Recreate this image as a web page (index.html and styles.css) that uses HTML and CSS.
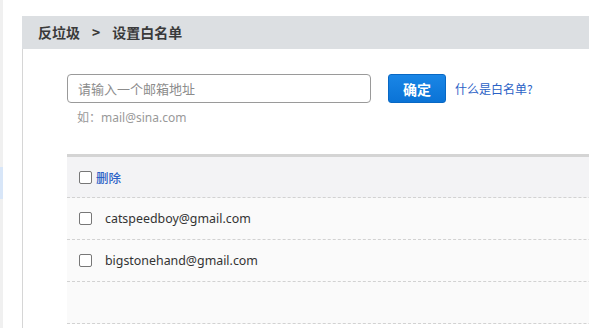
FILE: index.html
```html
<!DOCTYPE html>
<html>
<head>
<meta charset="utf-8">
<link rel="stylesheet" href="styles.css">
</head>
<body>
<div class="page">
  <aside class="side"><div class="side-active"></div></aside>
  <main class="main">
    <div class="crumb">反垃圾<span class="sep">&gt;</span>设置白名单</div>
    <div class="body">
      <div class="form">
        <input class="email" type="text" placeholder="请输入一个邮箱地址">
        <button class="ok">确定</button>
        <a class="help">什么是白名单?</a>
      </div>
      <div class="hint">如：mail@sina.com</div>
      <div class="list">
        <div class="row head"><span class="cb"></span><a class="del">删除</a></div>
        <div class="row"><span class="cb"></span><span class="addr">catspeedboy@gmail.com</span></div>
        <div class="row"><span class="cb"></span><span class="addr">bigstonehand@gmail.com</span></div>
        <div class="row"></div>
      </div>
    </div>
  </main>
</div>
</body>
</html>
```
FILE: styles.css
```css
html, body {
  margin: 0;
  padding: 0;
  background: #fff;
  overflow: hidden;
  font-family: "Noto Sans", "Noto Sans CJK SC", sans-serif;
}
.page {
  display: flex;
  height: 328px;
}
.side {
  flex: 0 0 3px;
  width: 3px;
  background: #f0f0f0;
  padding-top: 167px;
  box-sizing: border-box;
}
.side-active {
  height: 32px;
  background: #d8e6f8;
}
.main {
  margin-left: 19px;
  margin-top: 16px;
  flex: 1;
  display: flex;
  flex-direction: column;
  min-width: 0;
}
.crumb {
  height: 33px;
  background: #dcdfe2;
  box-sizing: border-box;
  padding-left: 16px;
  font-size: 14px;
  font-weight: bold;
  color: #3a3a3a;
  line-height: 33px;
  font-family: "Noto Sans CJK SC", sans-serif;
}
.sep {
  margin: 0 12px 0 12px;
}
.body {
  flex: 1;
  border-left: 1px solid #d6d6d6;
  padding: 25px 0 0 44px;
}
.form {
  display: flex;
  align-items: center;
  height: 29px;
}
.email {
  width: 304px;
  height: 29px;
  box-sizing: border-box;
  border: 1px solid #9a9a9a;
  border-radius: 4px;
  padding: 0 10px;
  font-size: 13px;
  font-family: "Noto Sans CJK SC", sans-serif;
  outline: none;
}
.email::placeholder {
  color: #8c8c8c;
}
.ok {
  margin-left: 17px;
  width: 58px;
  height: 29px;
  border: 1px solid #0868c4;
  border-radius: 3px;
  background: linear-gradient(#1a86e6, #0a73d6);
  color: #fff;
  font-size: 14px;
  font-weight: bold;
  font-family: "Noto Sans CJK SC", sans-serif;
  padding: 0;
}
.help {
  margin-left: 9px;
  font-size: 12px;
  color: #2b62c6;
  font-family: "Noto Sans CJK SC", sans-serif;
}
.hint {
  margin-top: 7px;
  padding-left: 10px;
  font-size: 12px;
  color: #999;
  line-height: 16px;
}
.list {
  margin-top: 28px;
  width: 700px;
  border-top: 3px solid #d4d4d4;
}
.row {
  height: 42px;
  box-sizing: border-box;
  border-bottom: 1px dashed #d2d2d2;
  background: #fafafa;
  display: flex;
  align-items: center;
  padding-left: 12px;
}
.row.head {
  height: 41px;
  background: #f3f3f5;
}
.cb {
  width: 11px;
  height: 11px;
  border: 1px solid #777;
  border-radius: 2px;
  background: #fff;
}
.del {
  margin-left: 4px;
  font-size: 12.5px;
  font-weight: 500;
  color: #2b62c6;
  font-family: "Noto Sans CJK SC", sans-serif;
}
.addr {
  margin-left: 13px;
  font-size: 12.4px;
  color: #333;
}
```
